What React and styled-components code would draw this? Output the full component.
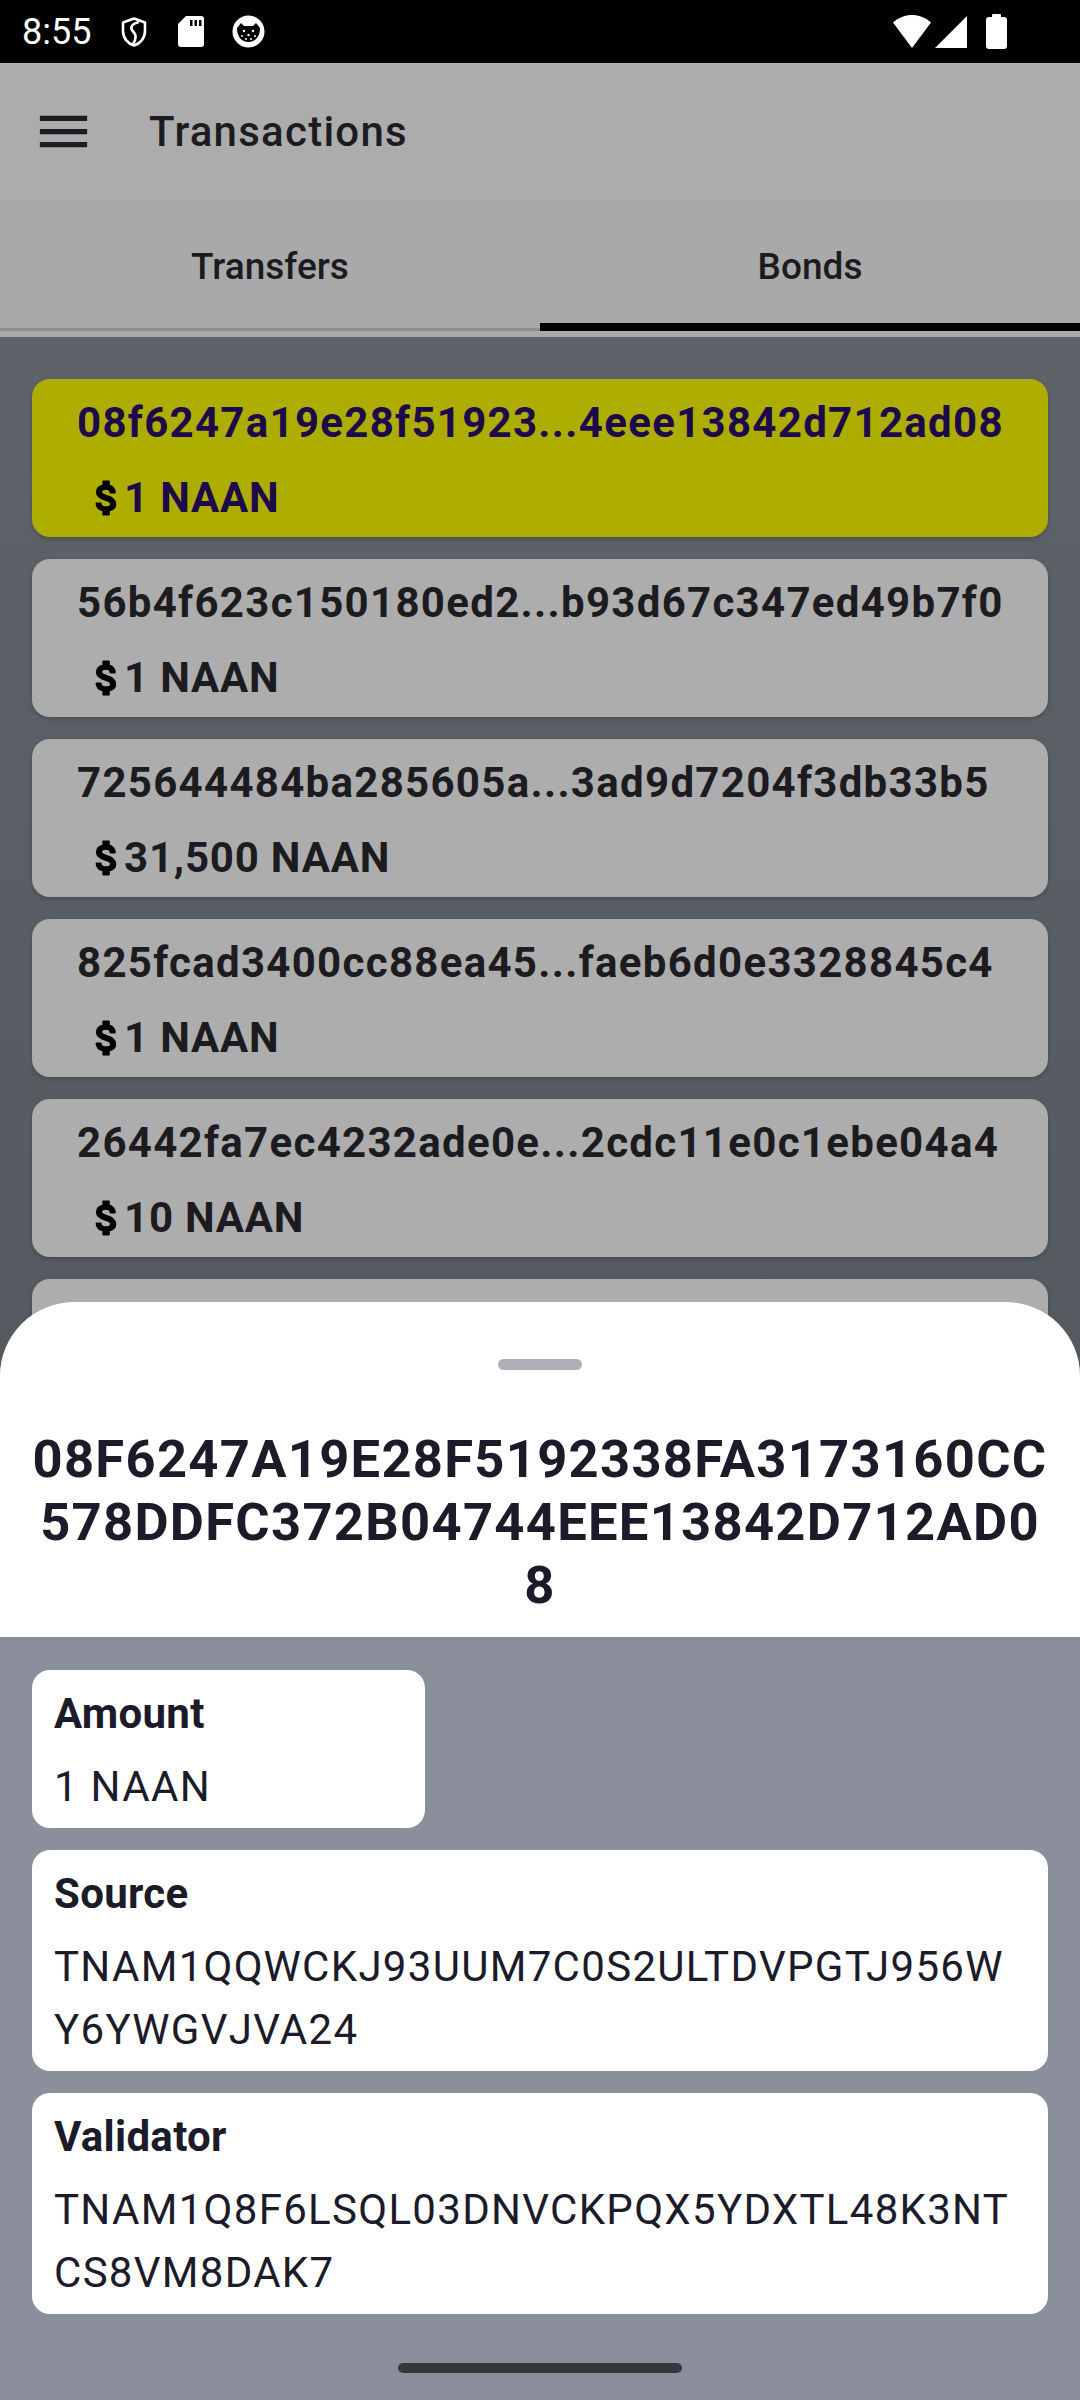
import React from "react";
import styled, { createGlobalStyle } from "styled-components";
import { MdMenu } from "react-icons/md";

const GlobalStyle = createGlobalStyle`
  body {
    margin: 0;
    font-family: Roboto, "Noto Sans", sans-serif;
  }
`;

const Screen = styled.div`
  position: relative;
  width: 1080px;
  height: 2400px;
  overflow: hidden;
  display: flex;
  flex-direction: column;
  background: #5d6168;
`;

const StatusBar = styled.div`
  height: 63px;
  flex-shrink: 0;
  background: #000;
  display: flex;
  align-items: center;
  justify-content: space-between;
  padding: 0 73px 0 22px;
  color: #fff;
`;

const StatusLeft = styled.div`
  display: flex;
  align-items: center;
`;

const Clock = styled.span`
  font-size: 36px;
  margin-right: 29px;
`;

const StatusIcon = styled.svg`
  display: block;
  margin-right: ${(p) => p.$gap || 0}px;
`;

const StatusRight = styled.div`
  display: flex;
  align-items: center;
`;

const AppBar = styled.div`
  height: 137px;
  flex-shrink: 0;
  background: #acacac;
  display: flex;
  align-items: center;
  padding-left: 32px;
  color: #1c1b22;
`;

const Title = styled.h1`
  margin: 0 0 0 54px;
  font-size: 42px;
  font-weight: 500;
  letter-spacing: 1.25px;
`;

const TabRow = styled.div`
  height: 137px;
  flex-shrink: 0;
  background: #aaa9aa;
  display: flex;
  padding-bottom: 6px;
  box-sizing: border-box;
`;

const Tab = styled.div`
  flex: 1;
  display: flex;
  flex-direction: column;
`;

const TabLabel = styled.div`
  flex: 1;
  display: flex;
  align-items: center;
  justify-content: center;
  padding-top: 10px;
  font-size: 37px;
  font-weight: 500;
  color: #1c1b1f;
`;

const TabIndicator = styled.div`
  height: 8px;
  background: ${(p) =>
    p.$active ? "#000" : "linear-gradient(transparent 5px, #8e8b90 5px)"};
`;

const List = styled.div`
  flex: 1;
  display: flex;
  flex-direction: column;
  gap: 22px;
  padding: 42px 32px;
  background: linear-gradient(#5e6269, #555960 1000px);
`;

const TxCard = styled.div`
  height: 158px;
  box-sizing: border-box;
  flex-shrink: 0;
  border-radius: 18px;
  padding: 12px 0 8px 45px;
  background: ${(p) => (p.$selected ? "#adad00" : "#adadad")};
  color: ${(p) => (p.$selected ? "#1d0a4b" : "#1c1b1f")};
  box-shadow: 0 2px 4px rgba(0, 0, 0, 0.18);
`;

const Hash = styled.div`
  font-size: 42px;
  line-height: 63px;
  font-weight: 700;
  letter-spacing: 1.3px;
  white-space: nowrap;
`;

const AmountRow = styled.div`
  display: flex;
  align-items: center;
  margin: 12px 0 0 8px;
  font-size: 42px;
  line-height: 63px;
  font-weight: 700;
  letter-spacing: 0.8px;
`;

const Dollar = styled.svg`
  display: block;
  flex-shrink: 0;
  margin-right: -5px;
`;

const Sheet = styled.div`
  position: absolute;
  left: 0;
  right: 0;
  top: 1302px;
  bottom: 0;
  border-radius: 74px 74px 0 0;
  overflow: hidden;
  background: #8a8f9b;
  display: flex;
  flex-direction: column;
`;

const SheetHeader = styled.div`
  background: #fff;
  padding: 57px 32px 20px;
  display: flex;
  flex-direction: column;
  align-items: center;
`;

const Handle = styled.div`
  width: 84px;
  height: 11px;
  border-radius: 6px;
  background: #b0aeb4;
`;

const SheetTitle = styled.h2`
  margin: 58px 0 0;
  width: 100%;
  text-align: center;
  font-size: 52.5px;
  line-height: 63px;
  font-weight: 700;
  letter-spacing: 1.3px;
  word-break: break-all;
  color: #1d1b29;
`;

const SheetBody = styled.div`
  display: flex;
  flex-direction: column;
  gap: 22px;
  padding: 33px 32px;
`;

const InfoCard = styled.div`
  background: #fff;
  border-radius: 18px;
  padding: 12px 22px 10px;
  align-self: ${(p) => (p.$compact ? "flex-start" : "stretch")};
  width: ${(p) => (p.$compact ? "393px" : "auto")};
  box-sizing: border-box;
  color: #1c1b2a;
`;

const InfoLabel = styled.div`
  font-size: 42px;
  line-height: 63px;
  font-weight: 700;
  letter-spacing: 0.3px;
`;

const InfoValue = styled.div`
  margin-top: 10px;
  font-size: 42px;
  line-height: 63px;
  letter-spacing: 1.3px;
  word-break: break-all;
`;

const GestureBar = styled.div`
  position: absolute;
  left: 398px;
  bottom: 27px;
  width: 284px;
  height: 10px;
  border-radius: 5px;
  background: #36373b;
`;

const transactions = [
  { hash: "08f6247a19e28f51923...4eee13842d712ad08", amount: "1 NAAN", selected: true },
  { hash: "56b4f623c150180ed2...b93d67c347ed49b7f0", amount: "1 NAAN" },
  { hash: "725644484ba285605a...3ad9d7204f3db33b5", amount: "31,500 NAAN" },
  { hash: "825fcad3400cc88ea45...faeb6d0e3328845c4", amount: "1 NAAN" },
  { hash: "26442fa7ec4232ade0e...2cdc11e0c1ebe04a4", amount: "10 NAAN" },
  { hash: "b1e09a6f3c2d4e7a95b...7c1d2e3f4a5b6c7d8", amount: "1 NAAN" },
];

const details = [
  { label: "Amount", value: "1 NAAN", compact: true },
  { label: "Source", value: "TNAM1QQWCKJ93UUM7C0S2ULTDVPGTJ956WY6YWGVJVA24" },
  { label: "Validator", value: "TNAM1Q8F6LSQL03DNVCKPQX5YDXTL48K3NTCS8VM8DAK7" },
];

const DollarIcon = () => (
  <Dollar width="44" height="44" viewBox="0 0 24 24">
    <path
      d="M11.8 10.9c-2.27-.59-3-1.2-3-2.15 0-1.09 1.01-1.85 2.7-1.85 1.78 0 2.44.85 2.5 2.1h2.21c-.07-1.72-1.12-3.3-3.21-3.81V3h-3v2.16c-1.94.42-3.5 1.68-3.5 3.61 0 2.31 1.91 3.46 4.7 4.13 2.5.6 3 1.48 3 2.41 0 .69-.49 1.79-2.7 1.79-2.06 0-2.87-.92-2.98-2.1h-2.2c.12 2.19 1.76 3.42 3.68 3.83V21h3v-2.15c1.95-.37 3.5-1.5 3.5-3.55 0-2.84-2.43-3.81-4.7-4.4z"
      fill="#000"
      stroke="#000"
      strokeWidth="1.1"
      strokeLinejoin="round"
    />
  </Dollar>
);

const App = () => {
  return (
    <Screen>
      <GlobalStyle />
      <StatusBar>
        <StatusLeft>
          <Clock>8:55</Clock>
          <StatusIcon $gap={30} width="28" height="32" viewBox="0 0 28 32">
            <path
              d="M14 2.5 L25 6.5 V15 C25 22 20.5 27.5 14 29.5 C7.5 27.5 3 22 3 15 V6.5 Z"
              fill="none"
              stroke="#fff"
              strokeWidth="2.6"
              strokeLinejoin="round"
            />
            <path
              d="M19 6 C11 8 9.5 12 13.5 16 C16.5 19 16 23.5 13 28"
              fill="none"
              stroke="#fff"
              strokeWidth="2.6"
            />
          </StatusIcon>
          <StatusIcon $gap={28} width="26" height="31" viewBox="0 0 26 31">
            <path d="M8 0 H23 Q26 0 26 3 V28 Q26 31 23 31 H3 Q0 31 0 28 V8 Z" fill="#fff" />
            <rect x="12" y="4" width="2.5" height="6" fill="#000" />
            <rect x="16.5" y="4" width="2.5" height="6" fill="#000" />
            <rect x="21" y="4" width="2.5" height="6" fill="#000" />
          </StatusIcon>
          <StatusIcon width="33" height="33" viewBox="0 0 33 33">
            <circle cx="16.5" cy="16.5" r="16" fill="#fff" />
            <path d="M5 13 L9 8 L12 11 H21 L24 8 L28 13 C28 22 23 27 16.5 27 C10 27 5 22 5 13 Z" fill="#000" />
            <circle cx="12" cy="16" r="1.2" fill="#fff" />
            <circle cx="21" cy="16" r="1.2" fill="#fff" />
            <circle cx="16.5" cy="20" r="1.2" fill="#fff" />
            <circle cx="10" cy="21" r="1" fill="#fff" />
            <circle cx="23" cy="21" r="1" fill="#fff" />
            <circle cx="14" cy="24" r="1" fill="#fff" />
            <circle cx="19" cy="24" r="1" fill="#fff" />
          </StatusIcon>
        </StatusLeft>
        <StatusRight>
          <StatusIcon $gap={3} width="40" height="35" viewBox="0 0 40 35">
            <path d="M1 8.5 C12 -1.5 28 -1.5 39 8.5 L20 34 Z" fill="#fff" />
          </StatusIcon>
          <StatusIcon $gap={19} width="32" height="34" viewBox="0 0 32 34">
            <path d="M32 1 V33 H0 Z" fill="#fff" />
          </StatusIcon>
          <StatusIcon width="21" height="35" viewBox="0 0 21 35">
            <rect x="6" y="0" width="9" height="5" rx="1" fill="#fff" />
            <rect x="0" y="3" width="21" height="32" rx="3" fill="#fff" />
          </StatusIcon>
        </StatusRight>
      </StatusBar>

      <AppBar>
        <MdMenu size={63} />
        <Title>Transactions</Title>
      </AppBar>

      <TabRow>
        <Tab>
          <TabLabel>Transfers</TabLabel>
          <TabIndicator />
        </Tab>
        <Tab>
          <TabLabel>Bonds</TabLabel>
          <TabIndicator $active />
        </Tab>
      </TabRow>

      <List>
        {transactions.map((tx) => (
          <TxCard key={tx.hash} $selected={tx.selected}>
            <Hash>{tx.hash}</Hash>
            <AmountRow>
              <DollarIcon />
              <span>{tx.amount}</span>
            </AmountRow>
          </TxCard>
        ))}
      </List>

      <Sheet>
        <SheetHeader>
          <Handle />
          <SheetTitle>
            08F6247A19E28F5192338FA3173160CC578DDFC372B04744EEE13842D712AD08
          </SheetTitle>
        </SheetHeader>
        <SheetBody>
          {details.map((d) => (
            <InfoCard key={d.label} $compact={d.compact}>
              <InfoLabel>{d.label}</InfoLabel>
              <InfoValue>{d.value}</InfoValue>
            </InfoCard>
          ))}
        </SheetBody>
      </Sheet>

      <GestureBar />
    </Screen>
  );
};

export default App;
